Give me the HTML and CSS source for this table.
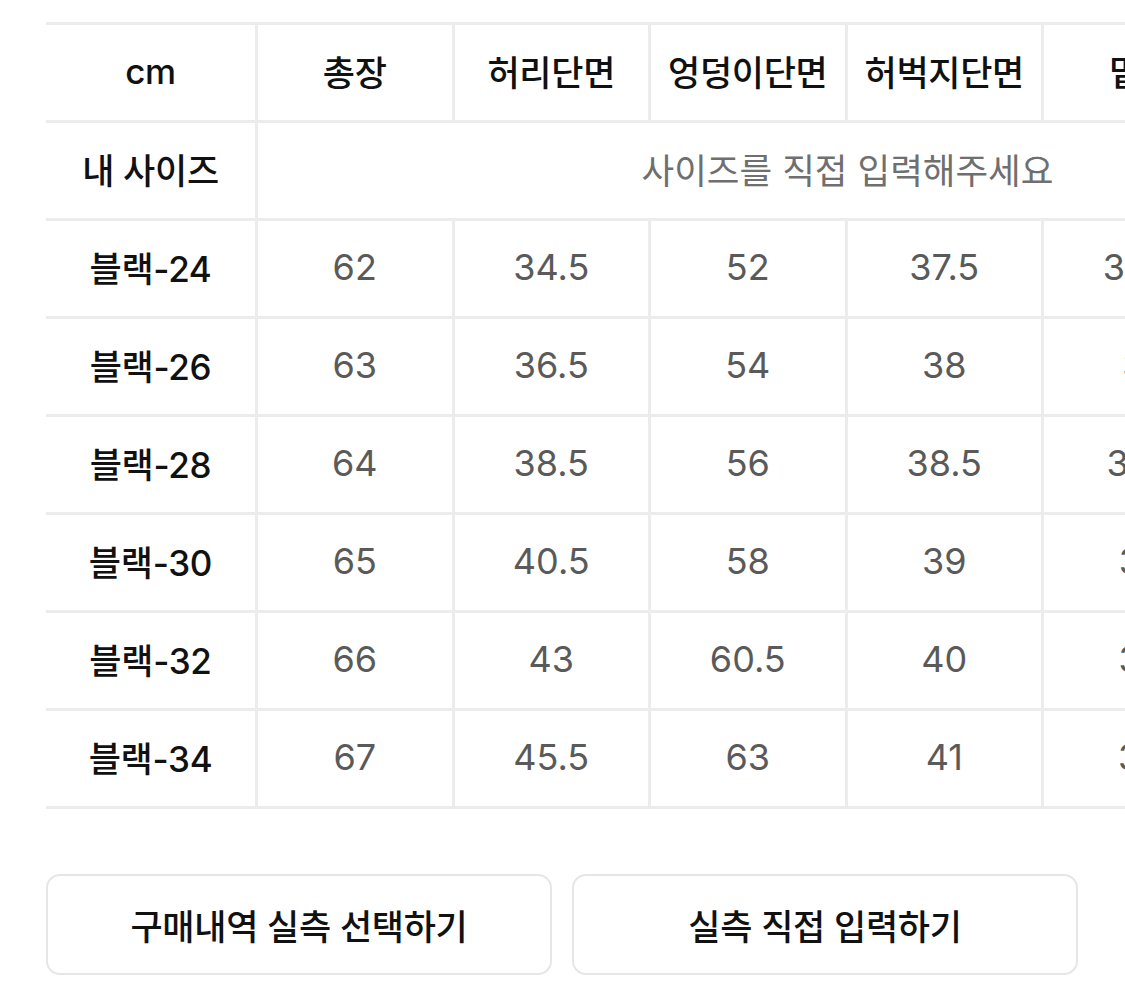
FILE: index.html
```html
<!DOCTYPE html>
<html lang="ko">
<head>
<meta charset="utf-8">
<title>실측 사이즈</title>
<link rel="stylesheet" href="styles.css">
</head>
<body>
<main class="page">
  <section class="size-table">
    <div class="fixed-col">
      <div class="cell head">cm</div>
      <div class="cell label">내 사이즈</div>
      <div class="cell label">블랙-24</div>
      <div class="cell label">블랙-26</div>
      <div class="cell label">블랙-28</div>
      <div class="cell label">블랙-30</div>
      <div class="cell label">블랙-32</div>
      <div class="cell label">블랙-34</div>
    </div>
    <div class="scroll-area">
      <div class="grid">
        <div class="cell head">총장</div>
        <div class="cell head">허리단면</div>
        <div class="cell head">엉덩이단면</div>
        <div class="cell head">허벅지단면</div>
        <div class="cell head">밑위</div>
        <div class="cell head">밑단단면</div>

        <div class="cell input-cell">사이즈를 직접 입력해주세요</div>

        <div class="cell val">62</div><div class="cell val">34.5</div><div class="cell val">52</div><div class="cell val">37.5</div><div class="cell val">30.5</div><div class="cell val">15</div>
        <div class="cell val">63</div><div class="cell val">36.5</div><div class="cell val">54</div><div class="cell val">38</div><div class="cell val">31</div><div class="cell val">15.5</div>
        <div class="cell val">64</div><div class="cell val">38.5</div><div class="cell val">56</div><div class="cell val">38.5</div><div class="cell val">31.5</div><div class="cell val">16</div>
        <div class="cell val">65</div><div class="cell val">40.5</div><div class="cell val">58</div><div class="cell val">39</div><div class="cell val">32</div><div class="cell val">16.5</div>
        <div class="cell val">66</div><div class="cell val">43</div><div class="cell val">60.5</div><div class="cell val">40</div><div class="cell val">33</div><div class="cell val">17</div>
        <div class="cell val">67</div><div class="cell val">45.5</div><div class="cell val">63</div><div class="cell val">41</div><div class="cell val">34</div><div class="cell val">17.5</div>
      </div>
    </div>
  </section>
  <div class="actions">
    <button class="btn" type="button">구매내역 실측 선택하기</button>
    <button class="btn" type="button">실측 직접 입력하기</button>
  </div>
</main>
</body>
</html>
```
FILE: styles.css
```css
html, body {
  margin: 0;
  padding: 0;
  background: #fff;
  overflow: hidden;
}
body {
  font-family: "Inter", "Noto Sans CJK KR", sans-serif;
  color: #111;
}
.page {
  padding: 22px 0 0 46px;
}
.size-table {
  display: flex;
  border-top: 3px solid #ececec;
}
.fixed-col {
  width: 212px;
  flex: none;
  display: flex;
  flex-direction: column;
}
.fixed-col .cell {
  border-right: 3px solid #ececec;
}
.scroll-area {
  flex: 1;
  min-width: 0;
  overflow: hidden;
}
.grid {
  display: grid;
  grid-template-columns: repeat(6, 196.5px);
  width: 1179px;
}
.cell {
  box-sizing: border-box;
  height: 98px;
  padding-bottom: 4px;
  border-bottom: 3px solid #ececec;
  display: flex;
  align-items: center;
  justify-content: center;
  font-size: 35px;
  white-space: nowrap;
  letter-spacing: -0.3px;
}
.grid .cell {
  border-right: 3px solid #ececec;
}
.head {
  font-weight: 500;
  color: #111;
}
.label {
  font-weight: 500;
  color: #111;
}
.grid .input-cell {
  grid-column: 1 / -1;
  border-right: none;
  color: #6f6f6f;
  font-size: 35.5px;
  font-weight: 400;
  letter-spacing: 0;
}
.val {
  color: #5a5a5a;
  font-weight: 400;
  font-size: 36px;
  letter-spacing: 0;
}
.actions {
  display: flex;
  gap: 20px;
  width: 1032px;
  margin-top: 65px;
}
.btn {
  flex: 1;
  height: 101px;
  background: #fff;
  border: 2px solid #e6e6e6;
  border-radius: 14px;
  font-family: "Inter", "Noto Sans CJK KR", sans-serif;
  font-size: 35px;
  font-weight: 500;
  color: #111;
  letter-spacing: -0.3px;
  padding: 0;
}
```
